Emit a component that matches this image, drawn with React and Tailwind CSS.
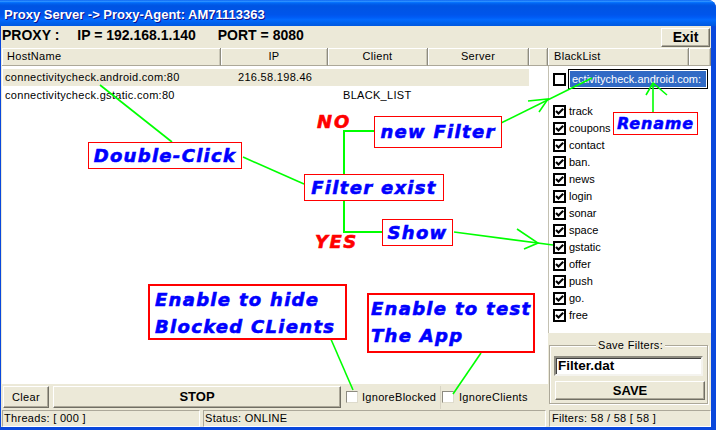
import React from "react";

const ann = "font-['DejaVu_Sans',sans-serif] font-bold italic text-[#0000ff] text-[18px] leading-[18px] tracking-[1.3px] whitespace-nowrap [-webkit-text-stroke:0.6px_#0000ff]";

function Check({ checked }) {
  return (
    <div className="w-[13px] h-[13px] border-2 border-black bg-white flex items-center justify-center shrink-0">
      {checked && (
        <svg width="9" height="9" viewBox="0 0 9 9">
          <path d="M1 4 L3.5 6.5 L8.2 1.8" fill="none" stroke="black" strokeWidth="2.2" />
        </svg>
      )}
    </div>
  );
}

function XpBox() {
  return (
    <div className="w-[12px] h-[12px] border border-t-[#8d8b80] border-l-[#8d8b80] border-r-[#dedbcc] border-b-[#dedbcc] bg-white shrink-0" />
  );
}

function Btn({ className, children }) {
  return (
    <div
      className={
        "bg-[#ece9d8] border border-t-white border-l-white border-r-[#716f64] border-b-[#716f64] shadow-[inset_-1px_-1px_0_#aca899] flex items-center justify-center shrink-0 " +
        className
      }
    >
      {children}
    </div>
  );
}

function HCell({ className, children }) {
  return (
    <div
      className={
        "h-full border-r border-r-[#8e8c80] border-b border-b-[#aca899] shadow-[inset_1px_1px_0_white,inset_-1px_0_0_#c9c6b6] flex items-center text-[11px] tracking-[0.3px] shrink-0 " +
        className
      }
    >
      {children}
    </div>
  );
}

const items = [
  "track",
  "coupons",
  "contact",
  "ban.",
  "news",
  "login",
  "sonar",
  "space",
  "gstatic",
  "offer",
  "push",
  "go.",
  "free",
];

function Overlay() {
  const g = "#00ff00";
  return (
    <div className="absolute inset-0 pointer-events-none">
      <svg className="absolute left-0 top-0" width="716" height="430">
        <g stroke={g} strokeWidth="1.6" fill="none">
          <line x1="100" y1="85" x2="172" y2="142" />
          <line x1="243" y1="157" x2="304" y2="184" />
          <line x1="501" y1="123" x2="592" y2="78" />
          <polyline points="528,101 548,99 539,112" />
          <line x1="653" y1="112" x2="653" y2="83" />
          <polyline points="646,95 653,83 667,95" />
          <line x1="454" y1="232" x2="553" y2="245" />
          <polyline points="517,229 538,243 524,249" />
          <line x1="330" y1="337" x2="353" y2="390" />
          <line x1="481" y1="353" x2="453" y2="394" />
        </g>
        <polyline
          points="375,131 344,131 344,232 382,232"
          stroke={g}
          strokeWidth="2"
          fill="none"
        />
      </svg>

      <div className="absolute left-[317px] top-[113px] font-['DejaVu_Sans',sans-serif] font-bold italic text-[#ff0000] text-[18px] leading-[18px] tracking-[2px] [-webkit-text-stroke:0.6px_#ff0000]">
        NO
      </div>
      <div className="absolute left-[315px] top-[233px] font-['DejaVu_Sans',sans-serif] font-bold italic text-[#ff0000] text-[18px] leading-[18px] tracking-[1.5px] [-webkit-text-stroke:0.6px_#ff0000]">
        YES
      </div>

      <div className="absolute left-[88px] top-[142px] w-[154px] h-[27px] border border-[#ff0000] bg-white flex items-center justify-center">
        <span className={ann}>Double-Click</span>
      </div>
      <div className="absolute left-[374px] top-[116px] w-[128px] h-[32px] border border-[#ff0000] bg-white flex items-center justify-center">
        <span className={ann}>new Filter</span>
      </div>
      <div className="absolute left-[304px] top-[174px] w-[140px] h-[27px] border border-[#ff0000] bg-white flex items-center justify-center">
        <span className={ann}>Filter exist</span>
      </div>
      <div className="absolute left-[382px] top-[219px] w-[71px] h-[27px] border border-[#ff0000] bg-white flex items-center justify-center">
        <span className={ann}>Show</span>
      </div>
      <div className="absolute left-[613px] top-[112px] w-[85px] h-[23px] border border-[#ff0000] bg-white flex items-center justify-center">
        <span className="font-['DejaVu_Sans',sans-serif] font-bold italic text-[#0000ff] text-[16px] leading-[16px] tracking-[0.8px] whitespace-nowrap [-webkit-text-stroke:0.5px_#0000ff]">
          Rename
        </span>
      </div>
      <div className="absolute left-[148px] top-[284px] w-[199px] h-[56px] border-2 border-[#ff0000] bg-white pl-[5px]">
        <div className={ann + " leading-[27px]"}>Enable to hide</div>
        <div className={ann + " leading-[27px]"}>Blocked CLients</div>
      </div>
      <div className="absolute left-[367px] top-[293px] w-[168px] h-[60px] border-2 border-[#ff0000] bg-white pl-[2px]">
        <div className={ann + " leading-[27px]"}>Enable to test</div>
        <div className={ann + " leading-[27px]"}>The App</div>
      </div>
    </div>
  );
}

export default function App() {
  return (
    <div className="w-[716px] h-[430px] relative overflow-hidden bg-white font-['Liberation_Sans',Arial,sans-serif] text-black">
      <div className="w-full h-full flex flex-col bg-[#0a48dc] rounded-tr-[8px] overflow-hidden">
        {/* Title bar */}
        <div className="h-[26px] shrink-0 bg-[linear-gradient(to_bottom,#0058ee_0%,#3593ff_4%,#288eff_6%,#127dff_8%,#036ffc_10%,#0262ee_14%,#0057e5_20%,#0054e3_24%,#0055eb_56%,#005bf5_66%,#026afe_76%,#0062ef_86%,#0058e0_100%)] pl-[4px] pt-[7px]">
          <div className="text-white font-bold text-[13px] leading-[15px] [text-shadow:1px_1px_0_#0f1089] whitespace-nowrap">
            Proxy Server -&gt; Proxy-Agent: AM71113363
          </div>
        </div>

        <div className="flex-1 flex pl-px pr-[5px] pb-[3px] min-h-0">
          <div className="flex-1 bg-[#ece9d8] flex flex-col">
            {/* top row */}
            <div className="h-[22px] flex items-start justify-between pl-px pr-px shrink-0">
              <div className="flex text-[14px] font-bold leading-[19px] whitespace-nowrap">
                <span>PROXY :</span>
                <span className="ml-[18px]">IP = 192.168.1.140</span>
                <span className="ml-[22px]">PORT = 8080</span>
              </div>
              <Btn className="mt-[2px] w-[49px] h-[19px] text-[14px] font-bold">Exit</Btn>
            </div>

            {/* middle */}
            <div className="h-[360px] flex shrink-0">
              {/* left col */}
              <div className="w-[547px] pl-px flex flex-col shrink-0">
                <div className="h-[18px] flex shrink-0">
                  <HCell className="w-[219px] pl-[5px]">HostName</HCell>
                  <HCell className="w-[107px] justify-center">IP</HCell>
                  <HCell className="w-[100px] justify-center">Client</HCell>
                  <HCell className="w-[101px] justify-center">Server</HCell>
                  <HCell className="flex-1" />
                </div>
                <div className="h-[318px] bg-white pt-[3px] text-[11px] tracking-[0.3px] shrink-0">
                  <div className="ml-px w-[526px] h-[17px] bg-[#ece9d8] flex items-center whitespace-nowrap">
                    <span className="w-[235px] pl-[2px] shrink-0">connectivitycheck.android.com:80</span>
                    <span className="w-[105px] shrink-0">216.58.198.46</span>
                  </div>
                  <div className="ml-px mt-px w-[526px] h-[17px] flex items-center whitespace-nowrap">
                    <span className="w-[340px] pl-[2px] shrink-0">connectivitycheck.gstatic.com:80</span>
                    <span>BLACK_LIST</span>
                  </div>
                </div>
                <div className="h-[24px] pt-[2px] flex items-start shrink-0">
                  <Btn className="ml-px w-[46px] h-[22px] text-[11px] tracking-[0.3px]">Clear</Btn>
                  <Btn className="ml-[4px] w-[288px] h-[22px] text-[13px] font-bold">STOP</Btn>
                  <div className="w-[99px] h-[22px] flex items-center pl-[5px] shrink-0">
                    <XpBox />
                    <span className="ml-[4px] text-[11px] tracking-[0.3px] whitespace-nowrap">IgnoreBlocked</span>
                  </div>
                  <div className="w-px h-[23px] bg-[#d8d4c4] shrink-0" />
                  <div className="flex-1 h-[22px] flex items-center pl-px">
                    <XpBox />
                    <span className="ml-[5px] text-[11px] tracking-[0.3px] whitespace-nowrap">IgnoreClients</span>
                  </div>
                </div>
              </div>

              {/* right col */}
              <div className="flex-1 flex flex-col min-w-0">
                <div className="h-[18px] flex shrink-0">
                  <HCell className="w-[141px] pl-[6px]">BlackList</HCell>
                  <HCell className="flex-1" />
                </div>
                <div className="h-[267px] bg-white border-l border-l-[#c4c1b2] pt-[3px] text-[11px] shrink-0">
                  <div className="h-[20px] flex items-center pl-[4px]">
                    <Check />
                    <div className="ml-[2px] w-[140px] h-[20px] border border-black bg-white p-px overflow-hidden shrink-0">
                      <div className="bg-[#316ac5] text-white h-full leading-[16px] whitespace-nowrap pl-[2px]">
                        ectivitycheck.android.com:
                      </div>
                    </div>
                  </div>
                  <div className="mt-[14px]">
                    {items.map((t) => (
                      <div key={t} className="h-[17px] flex items-center pl-[4px]">
                        <Check checked />
                        <span className="ml-[3px]">{t}</span>
                      </div>
                    ))}
                  </div>
                </div>
                <div className="flex-1 pt-[12px] pl-px">
                  <div className="relative w-[159px] h-[59px] border border-[#aca899] shadow-[inset_1px_1px_0_white,1px_1px_0_white] pt-[10px] pl-[4px]">
                    <div className="absolute left-[46px] top-[-8px] bg-[#ece9d8] px-[2px] text-[11px] tracking-[0.3px] leading-[14px] whitespace-nowrap">
                      Save Filters:
                    </div>
                    <div className="w-[149px] h-[20px] bg-white border-2 border-t-[#8d8b80] border-l-[#8d8b80] border-r-[#f4f3ee] border-b-[#f4f3ee] shadow-[inset_1px_1px_0_#404040] pl-[2px] flex items-center text-[13.5px] font-bold">
                      Filter.dat
                    </div>
                    <Btn className="mt-[5px] ml-px w-[150px] h-[19px] text-[13px] font-bold">SAVE</Btn>
                  </div>
                </div>
              </div>
            </div>

            {/* status bar */}
            <div className="flex-1 pt-[2px] pl-px flex gap-[3px] text-[11px] tracking-[0.3px]">
              <div className="w-[198px] h-[17px] border border-t-[#aca899] border-l-[#aca899] border-r-white border-b-white pl-px leading-[15px] whitespace-nowrap shrink-0">
                Threads: [ 000 ]
              </div>
              <div className="w-[343px] h-[17px] border border-t-[#aca899] border-l-[#aca899] border-r-white border-b-white pl-px leading-[15px] whitespace-nowrap shrink-0">
                Status: ONLINE
              </div>
              <div className="flex-1 h-[17px] border border-t-[#aca899] border-l-[#aca899] border-r-white border-b-white pl-[2px] leading-[15px] whitespace-nowrap">
                Filters: 58 / 58 [ 58 ]
              </div>
            </div>
          </div>
        </div>
      </div>
      <Overlay />
    </div>
  );
}
